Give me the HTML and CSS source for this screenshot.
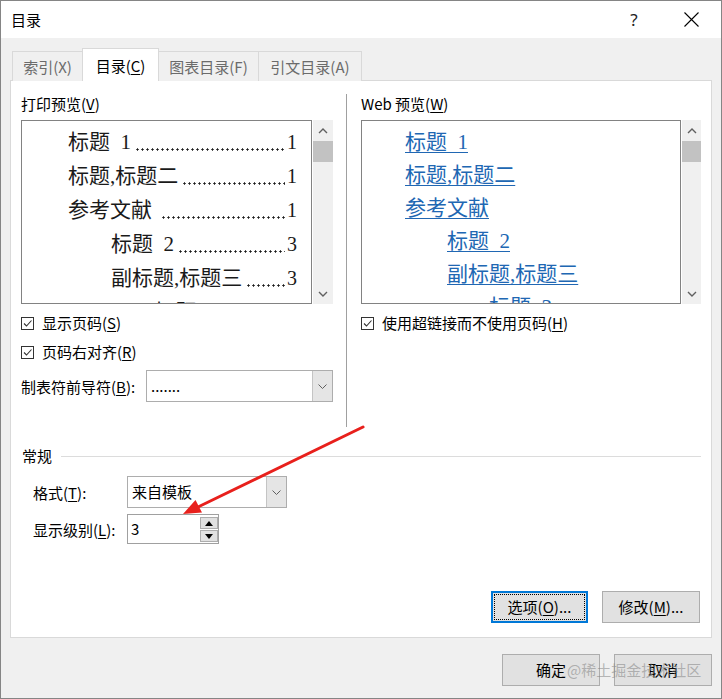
FILE: index.html
```html
<!DOCTYPE html>
<html lang="zh-CN">
<head>
<meta charset="utf-8">
<title>目录</title>
<link rel="stylesheet" href="styles.css">
</head>
<body>
<div class="window">
  <div class="titlebar">
    <div class="title">目录</div>
    <div class="tb-btn help">?</div>
    <div class="tb-btn close">
      <svg width="15" height="15" viewBox="0 0 15 15"><path d="M0.5 0.5 L14.5 14.5 M14.5 0.5 L0.5 14.5" stroke="#000" stroke-width="1.1" fill="none"/></svg>
    </div>
  </div>
  <div class="main">
    <div class="tabs">
      <div class="tab t1">索引(X)</div>
      <div class="tab t2 active">目录(<u>C</u>)</div>
      <div class="tab t3">图表目录(F)</div>
      <div class="tab t4">引文目录(A)</div>
    </div>
    <div class="panel">
      <div class="top">
        <div class="col col-left">
          <div class="label">打印预览(<u>V</u>)</div>
          <div class="preview">
            <div class="list print">
              <div class="toc l1"><span class="t">标题&nbsp;&nbsp;1</span><span class="dots"></span><span class="n">1</span></div>
              <div class="toc l1"><span class="t">标题,标题二</span><span class="dots"></span><span class="n">1</span></div>
              <div class="toc l1"><span class="t">参考文献&nbsp;</span><span class="dots"></span><span class="n">1</span></div>
              <div class="toc l2"><span class="t">标题&nbsp;&nbsp;2</span><span class="dots"></span><span class="n">3</span></div>
              <div class="toc l2"><span class="t">副标题,标题三</span><span class="dots"></span><span class="n">3</span></div>
              <div class="toc l3"><span class="t">标题&nbsp;&nbsp;3</span><span class="dots"></span><span class="n">3</span></div>
            </div>
            <div class="scroll">
              <div class="arrow"><svg width="10" height="6" viewBox="0 0 10 6"><path d="M1 5 L5 1 L9 5" stroke="#606060" stroke-width="1.4" fill="none"/></svg></div>
              <div class="thumb"></div>
              <div class="spacer"></div>
              <div class="arrow"><svg width="10" height="6" viewBox="0 0 10 6"><path d="M1 1 L5 5 L9 1" stroke="#606060" stroke-width="1.4" fill="none"/></svg></div>
            </div>
          </div>
          <div class="check first"><span class="box"><svg width="11" height="11" viewBox="0 0 11 11"><path d="M2 5.5 L4.5 8 L9.5 2.5" stroke="#333" stroke-width="1.1" fill="none"/></svg></span><span>显示页码(<u>S</u>)</span></div>
          <div class="check second"><span class="box"><svg width="11" height="11" viewBox="0 0 11 11"><path d="M2 5.5 L4.5 8 L9.5 2.5" stroke="#333" stroke-width="1.1" fill="none"/></svg></span><span>页码右对齐(<u>R</u>)</span></div>
          <div class="field leader">
            <span class="flabel">制表符前导符(<u>B</u>):</span>
            <div class="select">
              <span class="val">.......</span>
              <span class="sbtn"><svg width="9" height="5" viewBox="0 0 9 5"><path d="M0.5 0.5 L4.5 4.5 L8.5 0.5" stroke="#606060" stroke-width="1" fill="none"/></svg></span>
            </div>
          </div>
        </div>
        <div class="sep"></div>
        <div class="col col-right">
          <div class="label">Web 预览(<u>W</u>)</div>
          <div class="preview">
            <div class="list web">
              <div class="wl l1"><a>标题&nbsp;&nbsp;1</a></div>
              <div class="wl l1"><a>标题,标题二</a></div>
              <div class="wl l1"><a>参考文献</a></div>
              <div class="wl l2"><a>标题&nbsp;&nbsp;2</a></div>
              <div class="wl l2"><a>副标题,标题三</a></div>
              <div class="wl l3"><a>标题&nbsp;&nbsp;3</a></div>
            </div>
            <div class="scroll">
              <div class="arrow"><svg width="10" height="6" viewBox="0 0 10 6"><path d="M1 5 L5 1 L9 5" stroke="#606060" stroke-width="1.4" fill="none"/></svg></div>
              <div class="thumb"></div>
              <div class="spacer"></div>
              <div class="arrow"><svg width="10" height="6" viewBox="0 0 10 6"><path d="M1 1 L5 5 L9 1" stroke="#606060" stroke-width="1.4" fill="none"/></svg></div>
            </div>
          </div>
          <div class="check first"><span class="box"><svg width="11" height="11" viewBox="0 0 11 11"><path d="M2 5.5 L4.5 8 L9.5 2.5" stroke="#333" stroke-width="1.1" fill="none"/></svg></span><span>使用超链接而不使用页码(<u>H</u>)</span></div>
        </div>
      </div>
      <div class="group-head"><span>常规</span><span class="rule"></span></div>
      <div class="field fmt">
        <span class="glabel">格式(<u>T</u>):</span>
        <div class="select small">
          <span class="val">来自模板</span>
          <span class="sbtn"><svg width="9" height="5" viewBox="0 0 9 5"><path d="M0.5 0.5 L4.5 4.5 L8.5 0.5" stroke="#606060" stroke-width="1" fill="none"/></svg></span>
        </div>
      </div>
      <div class="field lvl">
        <span class="glabel">显示级别(<u>L</u>):</span>
        <div class="spin">
          <span class="val">3</span>
          <div class="spinbtns">
            <span class="sb"><svg width="8" height="5" viewBox="0 0 8 5"><path d="M0 5 L4 0 L8 5 Z" fill="#000"/></svg></span>
            <span class="sb"><svg width="8" height="5" viewBox="0 0 8 5"><path d="M0 0 L4 5 L8 0 Z" fill="#000"/></svg></span>
          </div>
        </div>
      </div>
      <div class="actions">
        <div class="btn focus"><span class="inner">选项(<u>O</u>)...</span></div>
        <div class="btn">修改(<u>M</u>)...</div>
      </div>
    </div>
    <div class="footer">
      <div class="btn big">确定</div>
      <div class="btn big">取消</div>
    </div>
  </div>
  <div class="watermark">@稀土掘金技术社区</div>
</div>
<svg class="annot" width="722" height="699" viewBox="0 0 722 699">
  <line x1="363" y1="427" x2="198" y2="507" stroke="#e8201c" stroke-width="3" stroke-linecap="round"/>
  <polygon points="183,514 202,512.5 195.5,500" fill="#e8201c"/>
</svg>
</body>
</html>
```

FILE: styles.css
```css
body {
  margin: 0;
  font-family: "Noto Sans CJK SC", "Noto Sans", sans-serif;
  font-size: 15px;
  color: #000;
  background: #fff;
}

u { text-underline-offset: 2px; }

.window {
  width: 722px;
  height: 699px;
  box-sizing: border-box;
  border: 1px solid #858585;
  background: #f0f0f0;
  display: flex;
  flex-direction: column;
  position: relative;
  overflow: hidden;
}

.titlebar {
  height: 37px;
  flex: none;
  background: #fff;
  display: flex;
  align-items: center;
  padding-left: 10px;
}

.title { flex: 1; font-size: 15px; line-height: 20px; }

.tb-btn {
  width: 46px;
  height: 37px;
  display: flex;
  align-items: center;
  justify-content: center;
}

.help {
  margin-right: 11px;
  font-family: "Noto Sans", sans-serif;
  font-size: 17px;
  color: #222;
}

.close { margin-right: 7px; }

.main {
  flex: 1;
  display: flex;
  flex-direction: column;
  padding: 10px 9px 0 9px;
}

.tabs {
  display: flex;
  align-items: flex-end;
  height: 33px;
  margin-left: 2px;
  margin-bottom: -1px;
  position: relative;
  z-index: 1;
}

.tab {
  height: 30px;
  box-sizing: border-box;
  border: 1px solid #d9d9d9;
  border-bottom: none;
  margin-right: -1px;
  line-height: 29px;
  color: #6b6b6b;
  background: #f0f0f0;
  white-space: nowrap;
  text-align: center;
}

.t1 { width: 71px; }
.t2 { width: 77px; }
.t3 { width: 101px; }
.t4 { width: 104px; }

.tab.active {
  height: 33px;
  padding-top: 2px;
  background: #fff;
  color: #000;
  position: relative;
  z-index: 1;
}

.panel {
  height: 558px;
  box-sizing: border-box;
  border: 1px solid #d9d9d9;
  background: #fff;
  padding: 13px 10px 0 10px;
  display: flex;
  flex-direction: column;
  flex: none;
}

.top { display: flex; height: 333px; }

.col-left { width: 312px; }
.col-right { flex: 1; }

.sep {
  width: 1px;
  background: #a0a0a0;
  margin: 0 14px 0 13px;
}

.label {
  height: 20px;
  line-height: 20px;
  margin-bottom: 6px;
  white-space: nowrap;
}

.preview { display: flex; height: 184px; gap: 1px; }

.list {
  flex: 1;
  min-width: 0;
  box-sizing: border-box;
  border: 1px solid #828282;
  overflow: hidden;
  font-family: "Liberation Serif", "Noto Sans CJK SC", serif;
  font-size: 21px;
  background: #fff;
}

.list.print { padding: 4px 14px 0 0; }

.toc {
  display: flex;
  height: 34px;
  line-height: 34px;
  white-space: nowrap;
  color: #1a1a1a;
}

.toc .dots {
  flex: 1 1 0;
  min-width: 0;
  margin: 0 2px 0 4px;
  background-image: radial-gradient(circle, #1a1a1a 0.9px, transparent 1.3px);
  background-size: 5px 3px;
  background-repeat: repeat-x;
  background-position: left bottom 8px;
}

.toc .n { flex: none; font-size: 20px; }
.toc .t { flex: none; }

.print .l1 { padding-left: 46px; }
.print .l2 { padding-left: 89px; }
.print .l3 { padding-left: 132px; }

.list.web { padding-top: 5px; }

.wl {
  height: 33px;
  line-height: 33px;
  white-space: nowrap;
}

.wl a {
  color: #2067b3;
  text-decoration: underline;
  text-underline-offset: 3px;
  text-decoration-thickness: 1px;
}

.web .l1 { padding-left: 43px; }
.web .l2 { padding-left: 85px; }
.web .l3 { padding-left: 127px; }

.scroll {
  width: 20px;
  background: #f0f0f0;
  display: flex;
  flex-direction: column;
}

.col-right .scroll { width: 19px; }

.arrow {
  height: 21px;
  display: flex;
  align-items: center;
  justify-content: center;
}

.thumb { height: 21px; background: #c2c2c2; }
.spacer { flex: 1; }

.check {
  display: flex;
  align-items: center;
  height: 18px;
  gap: 8px;
  line-height: 18px;
  white-space: nowrap;
}

.check.first { margin-top: 10px; }
.check.second { margin-top: 11px; }

.box {
  width: 13px;
  height: 13px;
  box-sizing: border-box;
  border: 1px solid #333;
  background: #fff;
  display: flex;
  align-items: center;
  justify-content: center;
  flex: none;
}

.field { display: flex; align-items: center; }

.leader { margin-top: 9px; }
.flabel { width: 125px; white-space: nowrap; }

.select {
  width: 187px;
  height: 32px;
  box-sizing: border-box;
  border: 1px solid #adadad;
  display: flex;
  background: #fff;
}

.select .val {
  flex: 1;
  padding-left: 4px;
  line-height: 30px;
}

.sbtn {
  width: 19px;
  background: #e5e5e5;
  border-left: 1px solid #c4c4c4;
  display: flex;
  align-items: center;
  justify-content: center;
}

.select.small { width: 160px; }

.group-head {
  display: flex;
  align-items: center;
  height: 20px;
  line-height: 20px;
  margin-top: 19px;
  padding-left: 1px;
}

.group-head .rule {
  flex: 1;
  height: 1px;
  background: #dcdcdc;
  margin-left: 9px;
}

.glabel { width: 94px; white-space: nowrap; }

.fmt { margin-top: 10px; padding-left: 12px; }
.lvl { margin-top: 6px; padding-left: 12px; }

.spin {
  width: 92px;
  height: 30px;
  box-sizing: border-box;
  border: 1px solid #a0a0a0;
  display: flex;
  background: #fff;
}

.spin .val { flex: 1; padding-left: 3px; line-height: 28px; }

.spinbtns {
  display: flex;
  flex-direction: column;
  gap: 1px;
  padding-top: 2px;
  width: 18px;
}

.sb {
  height: 12px;
  box-sizing: border-box;
  border: 1px solid #adadad;
  background: #e1e1e1;
  display: flex;
  align-items: center;
  justify-content: center;
}

.actions {
  display: flex;
  justify-content: flex-end;
  gap: 14px;
  margin-top: 47px;
  padding-right: 1px;
}

.btn {
  width: 98px;
  height: 32px;
  box-sizing: border-box;
  border: 1px solid #adadad;
  background: #e1e1e1;
  display: flex;
  align-items: center;
  justify-content: center;
  line-height: 20px;
  white-space: nowrap;
}

.btn.focus {
  width: 97px;
  border: 2px solid #0078d7;
  padding: 1px;
}

.btn.focus .inner {
  flex: 1;
  align-self: stretch;
  border: 1px dotted #000;
  display: flex;
  align-items: center;
  justify-content: center;
}

.footer {
  display: flex;
  justify-content: flex-end;
  gap: 14px;
  padding-top: 16px;
}

.watermark {
  position: absolute;
  left: 566px;
  top: 659px;
  font-size: 15px;
  line-height: 20px;
  color: rgba(130, 130, 130, 0.55);
  white-space: nowrap;
  pointer-events: none;
}

.annot {
  position: absolute;
  left: 0;
  top: 0;
  pointer-events: none;
}
```
